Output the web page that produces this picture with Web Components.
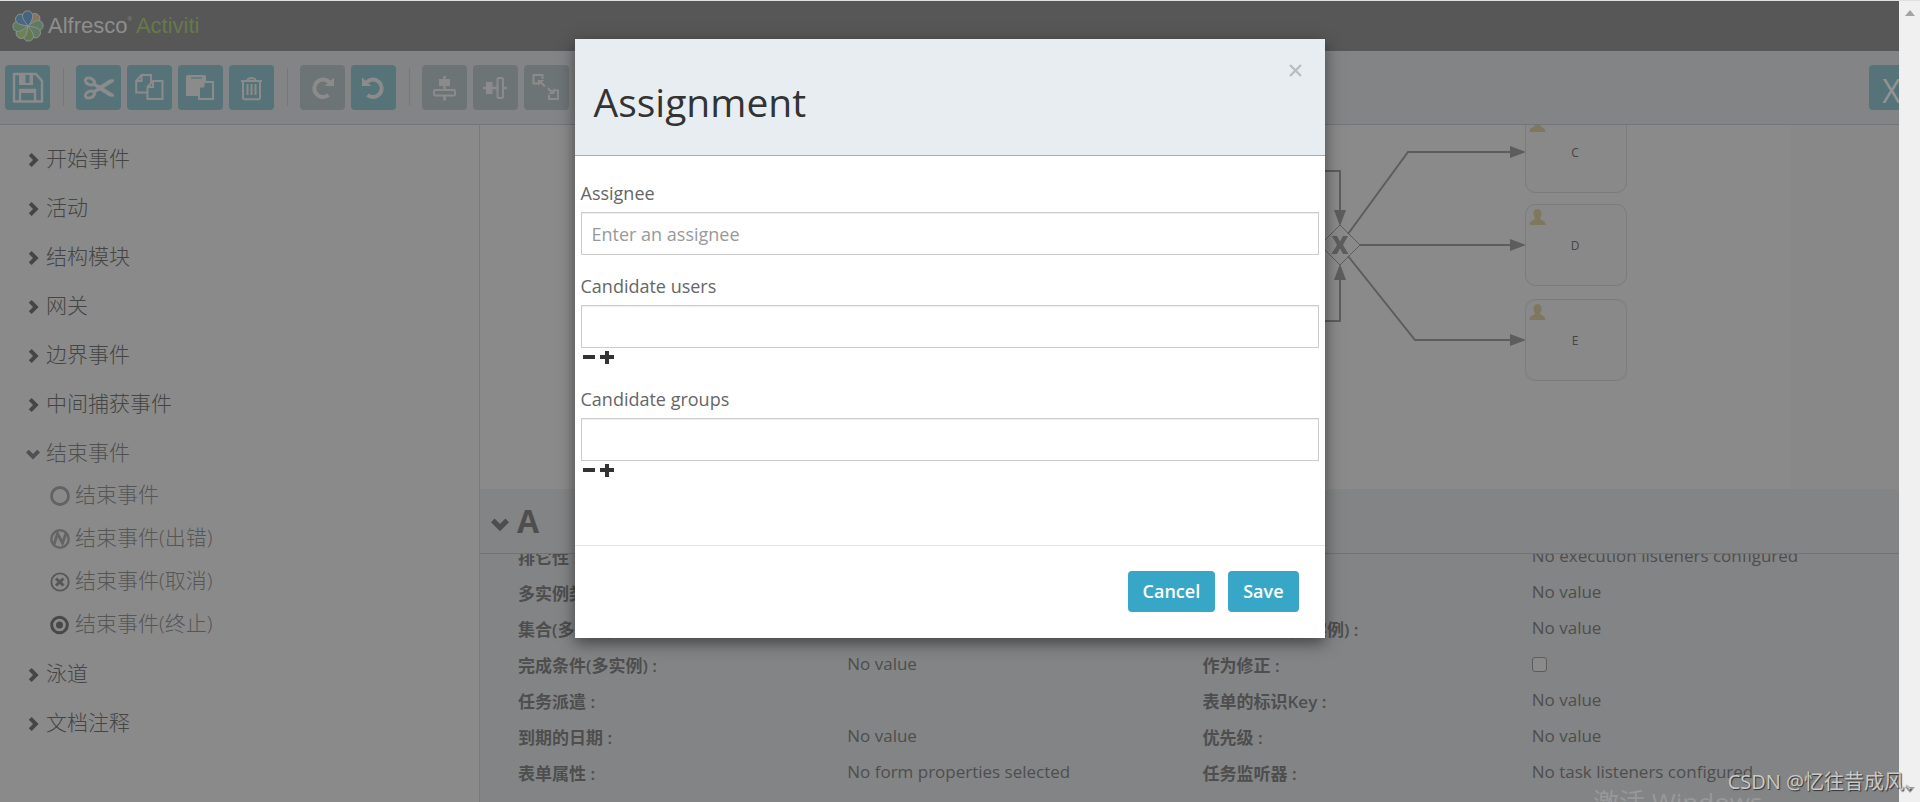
<!DOCTYPE html>
<html lang="zh-CN">
<head>
<meta charset="utf-8">
<title>Alfresco Activiti Editor</title>
<style>
html,body{margin:0;height:100%;overflow:hidden}
body{font-family:"Open Sans","Noto Sans CJK SC",sans-serif;background:#8a8a8a;color:#4c4c4c}
</style>
</head>
<body>
<editor-app></editor-app>
<script>
const define=(name,html,setup)=>customElements.define(name,class extends HTMLElement{
  constructor(){
    super();
    const t=document.createElement('template');
    t.innerHTML='<style>*{box-sizing:border-box}</style>'+html;
    this.attachShadow({mode:'open'}).appendChild(t.content.cloneNode(true));
  }
  connectedCallback(){ if(setup) setup(this,this.shadowRoot); }
});

/* ---------- small parts ---------- */
define('chevron-icon',`<style>
:host{display:inline-block;width:14px;height:14px;flex:none}
:host([down]) svg{transform:rotate(90deg)}
svg{display:block;width:100%;height:100%}</style>
<svg viewBox="0 0 14 14"><path d="M5.600 0 12.600 7l-7 7-2.800-2.800L7 7 2.800 2.800z" fill="currentColor"/></svg>`);

const TOOL_ICONS={
  save:'<path d="M9 9h22l6 7v20.500H9z M15 36v-11h15v11" fill="none" stroke-width="2.400"/><path d="M14 9h14v11H14z" stroke="none"/><path d="M20.500 10h4v8h-4z" fill="var(--tool-bg)" stroke="none"/><path d="M14 24h17v4H14z" stroke="none"/>',
  cut:'<g fill="none" stroke-width="3"><ellipse cx="14" cy="16.500" rx="4.800" ry="3.200" transform="rotate(25 14 16.500)"/><ellipse cx="14" cy="29.500" rx="4.800" ry="3.200" transform="rotate(-25 14 29.500)"/></g><path d="M17 17l7 3.500 9.500-6 4-.3.700 2.300L28 23l10.200 6.500-.7 2.300-4-.3L24 25.500 17 29l-1.500-2.500 5.500-3.500-5.500-3.500z" stroke="none"/>',
  copy:'<g fill="var(--tool-bg)" stroke-width="2"><path d="M14.500 10H24v17.500H9.200V16z"/><path d="M14.500 10v6H9.200" fill="none"/><path d="M26 16h9.500v18H20.500V22z"/><path d="M26 16v6h-5.500" fill="none"/></g>',
  paste:'<path d="M8 11.500q0-1.500 1.500-1.500h17q1.500 0 1.500 1.500V31H8z" stroke="none"/><path d="M13 13h11" stroke="var(--tool-bg)" stroke-width="1.200"/><path d="M26 17h9v17H21V22z" fill="var(--tool-bg)" stroke-width="2"/><path d="M26 17v5h-5z" stroke-width="1"/>',
  trash:'<path d="M12 16h21M18.500 15.500q0-2.500 4-2.500t4 2.500M14 16.500v16q0 1.700 1.700 1.700h13.600q1.700 0 1.700-1.700v-16" fill="none" stroke-width="2"/><path d="M18.500 19v11M22.500 19v11M26.500 19v11" stroke-width="2"/>',
  redo:'<path d="M29.500 17.500A8.700 8.700 0 1 0 28.500 30" fill="none" stroke-width="4"/><path d="M34 12.500V21h-9.500z" stroke="none"/>',
  undo:'<path d="M15.500 17.500A8.700 8.700 0 1 1 16.500 30" fill="none" stroke-width="4"/><path d="M11 12.500V21h9.500z" stroke="none"/>',
  alignv:'<path d="M17 14h11v7H17z" stroke="none"/><path d="M22.500 11v14M22.500 31v4.500" stroke-width="2.600"/><rect x="12" y="25" width="21" height="5.500" rx="1" fill="none" stroke-width="2"/>',
  alignh:'<path d="M13 17h6.500v12H13z" stroke="none"/><path d="M10 23h14M30 23h4" stroke-width="2.400"/><rect x="24.500" y="13" width="5.500" height="20" rx="1" fill="none" stroke-width="2"/>',
  size:'<path d="M14 18.500H9.500V10h9v4" fill="none" stroke-width="2"/><path d="M14 15h6l-2 2 3.500 3.500-1.500 1.500-3.500-3.500-2.500 2.500z" stroke="none"/><path d="M30 25.500h4V34h-9v-4" fill="none" stroke-width="2"/><path d="M30.500 29h-6l2-2-3.500-3 1.500-1.500 3.500 3 2.500-2.500z" stroke="none"/>'
};
define('tool-button',`<style>
:host{--tool-bg:#56737a;display:block;flex:none}
:host([off]){--tool-bg:#6d7475}
button{display:block;width:45px;height:45px;padding:0;border:0;border-radius:4px;background:var(--tool-bg);color:#939393;font:400 32px/51px "Open Sans",sans-serif;text-align:center}
svg{display:block;fill:#8b8b8b;stroke:#8b8b8b}</style><button type="button"></button>`,
(el,root)=>{
  const b=root.querySelector('button'),k=el.getAttribute('icon');
  b.setAttribute('aria-label',el.getAttribute('label'));
  if(el.hasAttribute('off')) b.disabled=true;
  if(k) b.innerHTML='<svg width="45" height="45" viewBox="0 0 45 45">'+TOOL_ICONS[k]+'</svg>';
  else b.textContent='X';
});

/* ---------- top bar ---------- */
define('brand-bar',`<style>
:host{display:flex;align-items:center;height:50px;padding-left:12px;background:#575757;font-family:"Liberation Sans",sans-serif;font-size:22px;line-height:26px}
svg{display:block;margin-right:4px}
.a{color:#8e8e8e}.b{color:#66794a;margin-left:4px}sup{font-size:6px;line-height:6px;vertical-align:12px}
</style>
<svg width="32" height="32" viewBox="-16 -16 32 32"><g stroke="#8c9299" stroke-width=".9"></g></svg>
<span class="a">Alfresco<sup>®</sup></span><span class="b">Activiti</span>`,
(el,root)=>{
  const c=['#8b7559','#5f7b62','#5f7b62','#64794e','#6f8254','#5f7b5c','#486a80','#436580'];
  root.querySelector('g').innerHTML=c.map((f,i)=>`<path d="M0 0C-3-5-5-8-4.500-11.500A5.200 5.200 0 0 1 5-12.500C6.500-8 4-4 0 0z" fill="${f}" transform="rotate(${i*45+40})"/>`).join('');
});

define('tool-bar',`<style>
:host{display:flex;align-items:center;gap:6px;height:74px;padding:0 0 1px 5px;background:#838485;border-bottom:1px solid #73757a;overflow:hidden}
i{width:1px;height:38px;margin:0 6px 0 7px;background:#75777a;flex:none}
.close{margin-left:auto;margin-right:-15px}
</style>
<tool-button icon="save" label="保存"></tool-button><i></i>
<tool-button icon="cut" label="剪切"></tool-button><tool-button icon="copy" label="复制"></tool-button><tool-button icon="paste" label="粘贴"></tool-button><tool-button icon="trash" label="删除"></tool-button><i></i>
<tool-button icon="redo" label="重做" off></tool-button><tool-button icon="undo" label="撤销"></tool-button><i></i>
<tool-button icon="alignv" label="垂直对齐" off></tool-button><tool-button icon="alignh" label="水平对齐" off></tool-button><tool-button icon="size" label="相同大小" off></tool-button>
<tool-button class="close" label="关闭"></tool-button>`);

/* ---------- palette ---------- */
define('palette-group',`<style>
:host{display:block;font-size:21px;font-weight:300;color:#454545}
:host([open]) .head{color:#505050}
:host([open]) .items{margin:-4px 0 4px}
.head{display:flex;align-items:center;height:49px;line-height:30px}
chevron-icon{margin:4px 6px 0 0}
</style><div class="head"><chevron-icon></chevron-icon><span></span></div><div class="items"><slot></slot></div>`,
(el,root)=>{
  root.querySelector('span').textContent=el.getAttribute('label');
  if(el.hasAttribute('open')) root.querySelector('chevron-icon').setAttribute('down','');
});
const EVENT_ICONS={
  none:'<circle cx="10" cy="10" r="8.500" stroke-width="2.800" stroke="#626262"/>',
  error:'<circle cx="10" cy="10" r="8.700" stroke-width="2.400" stroke="#646464"/><path d="M4 15.500 7.500 4.500l5 9.500 3.500-9.500" stroke-width="2.800" stroke="#646464"/>',
  cancel:'<circle cx="10" cy="10" r="8.700" stroke-width="1.800"/><path d="m6 6.500 7.500 7M13.500 6.500 6 13.500" stroke-width="3"/>',
  terminate:'<circle cx="9.500" cy="10" r="7.800" stroke-width="3" stroke="#484848"/><circle cx="9.500" cy="10" r="3.500" fill="#484848" stroke="none"/>'
};
define('palette-item',`<style>
:host{display:flex;align-items:center;height:43px;padding-left:24px;color:#565656;line-height:30px}
svg{display:block;margin:4px 5px 0 0;fill:none;stroke:#565656}
</style><svg width="20" height="20" viewBox="0 0 20 20"></svg><slot></slot>`,
(el,root)=>{root.querySelector('svg').innerHTML=EVENT_ICONS[el.getAttribute('kind')];});
define('stencil-palette',`<style>
:host{display:block;flex:none;width:480px;padding:8px 0 0 26px;border-right:1px solid #77797a}
</style>
<palette-group label="开始事件"></palette-group>
<palette-group label="活动"></palette-group>
<palette-group label="结构模块"></palette-group>
<palette-group label="网关"></palette-group>
<palette-group label="边界事件"></palette-group>
<palette-group label="中间捕获事件"></palette-group>
<palette-group label="结束事件" open>
<palette-item kind="none">结束事件</palette-item>
<palette-item kind="error">结束事件(出错)</palette-item>
<palette-item kind="cancel">结束事件(取消)</palette-item>
<palette-item kind="terminate">结束事件(终止)</palette-item>
</palette-group>
<palette-group label="泳道"></palette-group>
<palette-group label="文档注释"></palette-group>`);

/* ---------- process canvas ---------- */
const task=(y,name)=>`<g transform="translate(1525 ${y})"><rect x=".5" y=".5" width="101" height="81" rx="10" fill="#898989" stroke="#7b7b7b"/><path d="M12.500 5c2.500 0 4 1.500 4 4.500 0 2.500-1 4-1.500 5 1 2 5.500 2 5.500 6.500h-16c0-4.500 4.500-4.500 5.500-6.500-.5-1-1.500-2.500-1.500-5 0-3 1.500-4.500 4-4.500z" fill="#80775f"/><text x="50" y="46" text-anchor="middle">${name}</text></g>`;
define('process-canvas',`<style>
:host{display:block;height:364px;overflow:hidden;background:#888;flex:none}
svg{display:block;width:100%;height:100%}
text{font:12px "Open Sans",sans-serif;fill:#444}
</style><svg><g transform="translate(-480 -125)">
<rect x="480" y="125" width="1311" height="364" fill="#8a8a8a"/>
<g fill="none" stroke="#5d5d5d" stroke-width="2"><path d="M1320 171h20v40M1320 321h20v-42M1348 234l60-82h104M1360 245h152M1348 256l67 84h97"/>
<path d="M1340 225l20 20-20 20-20-20z" stroke-width="1"/></g>
<g fill="#5d5d5d"><path d="M1334 210h12l-6 16zM1334 280h12l-6-16zM1510 146v12l16-6zM1510 239v12l16-6zM1510 334v12l16-6z"/>
<path d="M1332 236h5l3 5.500 3-5.500h5l-5 9 5.500 9h-5.500l-3-5.500-3 5.500h-5.500l5.500-9z"/></g>
${task(111,'C')}${task(204,'D')}${task(299,'E')}</g></svg>`);

/* ---------- properties ---------- */
define('property-item',`<style>
:host{display:flex;height:36px;font-size:17px;line-height:24px;color:#4e4e4e}
dt,dd{flex:1;margin:0;white-space:nowrap}
dt{font-weight:600;padding-top:6px}dd{font-weight:400;padding-top:4px}
input{appearance:none;display:block;width:15px;height:15px;margin:5px 0 0;border:1px solid #5d5d5d;border-radius:3px;background:#8a8a8a}
</style><dt></dt><dd><slot></slot></dd>`,
(el,root)=>{
  const label=el.getAttribute('label');
  if(label) root.querySelector('dt').textContent=label+' :';
  if(el.hasAttribute('check')) root.querySelector('dd').innerHTML='<input type="checkbox" aria-label="'+label+'">';
});
define('property-panel',`<style>
:host{display:flex;flex-direction:column;flex:1;min-height:0;background:#838485}
header{display:flex;align-items:center;height:65px;flex:none;padding-left:11px;border-bottom:1px solid #707274;color:#4e4e4e}
chevron-icon{width:18px;height:18px;margin:6px 8px 0 0}
h3{margin:0;font-size:32px;line-height:40px;font-weight:700}
.view{flex:1;min-height:0;overflow:hidden;padding:0 38px}
.grid{display:grid;grid-template-columns:1fr 1fr;column-gap:26px;margin-top:-14px}
</style><header><chevron-icon down></chevron-icon><h3>A</h3></header>
<div class="view"><div class="grid">
<property-item label="排它性" check></property-item><property-item>No execution listeners configured</property-item>
<property-item label="多实例类型"></property-item><property-item>No value</property-item>
<property-item label="集合(多实例)"></property-item><property-item label="元素的变量(多实例)">No value</property-item>
<property-item label="完成条件(多实例)">No value</property-item><property-item label="作为修正" check></property-item>
<property-item label="任务派遣"></property-item><property-item label="表单的标识Key">No value</property-item>
<property-item label="到期的日期">No value</property-item><property-item label="优先级">No value</property-item>
<property-item label="表单属性">No form properties selected</property-item><property-item label="任务监听器">No task listeners configured</property-item>
</div></div>`);

/* ---------- dialog ---------- */
define('form-field',`<style>
:host{display:block;margin-bottom:19px;font-size:18px}
label{display:block;line-height:25px;margin-bottom:6px;color:#666}
input{display:block;width:100%;height:43px;padding:0 10px;border:1px solid #ccc;border-radius:0;background:#fff;box-shadow:inset 0 1px 1px rgba(0,0,0,.075);font:inherit;color:#555;outline:0}
input::placeholder{color:#999;opacity:1}
.adj{display:none;height:20px;padding:3px 0 0 1px;gap:4px}
:host([multi]) .adj{display:flex}
button{display:block;width:14px;height:14px;padding:0;border:0;background:none;color:#333}
svg{display:block}
</style><label for="f"></label><input id="f" type="text">
<div class="adj"><button type="button" aria-label="Remove"><svg width="14" height="14" viewBox="0 0 14 14"><path d="M1 4h12v4H1z" fill="currentColor"/></svg></button><button type="button" aria-label="Add"><svg width="14" height="14" viewBox="0 0 14 14"><path d="M0 4h5V0h4v4h5v4H9v5H5V8H0z" fill="currentColor"/></svg></button></div>`,
(el,root)=>{
  root.querySelector('label').textContent=el.getAttribute('label');
  root.querySelector('input').placeholder=el.getAttribute('placeholder')||'';
});
define('modal-dialog',`<style>
:host{position:absolute;inset:38px 21px auto 0;margin:0 auto;width:750px;background:#fff;box-shadow:0 5px 15px rgba(0,0,0,.5)}
header{display:flex;align-items:flex-start;justify-content:space-between;height:117px;padding:0 22px 0 19px;background:#e8edf1;border-bottom:1px solid #a1acb8}
h2{margin:36px 0 0;font-size:39px;line-height:54px;font-weight:400;color:#333}
.x{margin:22px 0 0;width:16px;height:20px;padding:0;border:0;background:none;color:#b9bec1}
.x svg{display:block}
.body{padding:25px 6px 45px}
footer{display:flex;justify-content:flex-end;gap:13px;padding:25px 26px 26px;border-top:1px solid #e5e5e5}
footer button{height:41px;padding:0 15px;border:0;border-radius:4px;background:#38a7c7;color:#fff;font:600 18px/25px "Open Sans",sans-serif}
</style><header><h2>Assignment</h2><button class="x" type="button" aria-label="Close"><svg width="16" height="20" viewBox="0 0 16 20"><path d="M3 4l11 11M14 4 3 15" stroke="currentColor" stroke-width="2.400"/></svg></button></header>
<div class="body"><form-field label="Assignee" placeholder="Enter an assignee"></form-field>
<form-field label="Candidate users" multi></form-field><form-field label="Candidate groups" multi></form-field></div>
<footer><button type="button">Cancel</button><button type="button">Save</button></footer>`);

/* ---------- page furniture ---------- */
define('scroll-track',`<style>
:host{display:flex;flex-direction:column;justify-content:space-between;align-items:center;flex:none;width:21px;padding:9px 0;background:#f0f0f0}
svg{display:block;fill:#a3a3a3}
</style><svg width="10" height="6"><path d="M5 0l5 6H0z"/></svg><svg width="10" height="6"><path d="M0 0h10L5 6z"/></svg>`);
define('water-marks',`<style>
:host{position:absolute;right:0;bottom:0;width:360px;height:34px;overflow:hidden;pointer-events:none;white-space:nowrap}
.win{position:absolute;left:33px;top:17px;font-size:26px;line-height:34px;color:#989898}
.csdn{position:absolute;right:-4px;top:0;font-size:20px;line-height:28px;color:#c9c9c9;text-shadow:1px 1px 1px #333}
</style><span class="win">激活 Windows</span><span class="csdn">CSDN @忆往昔成风、</span>`);

define('editor-app',`<style>
:host{position:relative;display:flex;height:100vh;border-top:1px solid #dce0de;box-sizing:border-box;overflow:hidden}
.page{display:flex;flex-direction:column;flex:1;min-width:0}
.main{display:flex;flex:1;min-height:0}
.work{display:flex;flex-direction:column;flex:1;min-width:0}
</style>
<div class="page"><brand-bar></brand-bar><tool-bar></tool-bar>
<div class="main"><stencil-palette></stencil-palette><div class="work"><process-canvas></process-canvas><property-panel></property-panel></div></div></div>
<scroll-track></scroll-track><modal-dialog></modal-dialog><water-marks></water-marks>`);
</script>
</body>
</html>
